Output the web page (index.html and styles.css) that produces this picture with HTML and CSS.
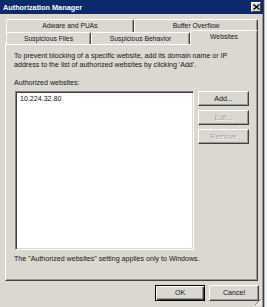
FILE: index.html
```html
<!DOCTYPE html>
<html>
<head>
<meta charset="utf-8">
<link rel="stylesheet" href="styles.css">
</head>
<body>
<div class="screen">
  <div class="window">
    <div class="titlebar">
      <span class="title">Authorization Manager</span>
      <span class="close"><svg width="7" height="6" viewBox="0 0 7 6"><path d="M0.5 0.5 L6.5 5.5 M6.5 0.5 L0.5 5.5" stroke="#000" stroke-width="1.3" fill="none"/></svg></span>
    </div>
    <div class="content">
      <div class="tabs">
        <div class="tabrow back">
          <div class="tab w-adware">Adware and PUAs</div>
          <div class="tab w-buffer">Buffer Overflow</div>
        </div>
        <div class="tabrow front">
          <div class="tab w-files">Suspicious Files</div>
          <div class="tab w-behavior">Suspicious Behavior</div>
          <div class="tab w-websites selected">Websites</div>
        </div>
      </div>
      <div class="panel">
        <p class="desc">To prevent blocking of a specific website, add its domain name or IP<br>address to the list of authorized websites by clicking 'Add'.</p>
        <div class="label">Authorized websites:</div>
        <div class="listrow">
          <div class="listbox">
            <div class="item">10.224.32.80</div>
          </div>
          <div class="sidebtns">
            <div class="btn">Add...</div>
            <div class="btn disabled">Edit...</div>
            <div class="btn disabled">Remove</div>
          </div>
        </div>
        <p class="note">The "Authorized websites" setting applies only to Windows.</p>
      </div>
      <div class="footer">
        <div class="btn default">OK</div>
        <div class="btn">Cancel</div>
      </div>
    </div>
    <svg class="grip" width="8" height="8" viewBox="0 0 8 8"><path d="M7 1 L1 7 M7 3 L3 7 M7 5 L5 7" stroke="#8c8a84" stroke-width="1" fill="none"/><path d="M8 2 L2 8 M8 4 L4 8 M8 6 L6 8" stroke="#ffffff" stroke-width="1" fill="none"/></svg>
  </div>
  <div class="behind"></div>
</div>
</body>
</html>
```
FILE: styles.css
```css
* { box-sizing: border-box; margin: 0; padding: 0; }
html, body { width: 267px; height: 307px; overflow: hidden; }
body {
  font-family: "Liberation Sans", Arial, sans-serif;
  font-size: 7.1px;
  color: #141414;
  background: #eef2f8;
}
.screen { display: flex; height: 307px; }
.window {
  position: relative;
  width: 264px;
  height: 307px;
  background: #dbd8d2;
  border-right: 1px solid #3c3c3c;
  box-shadow: inset -1px 0 0 #9a9892;
  display: flex;
  flex-direction: column;
}
.behind { flex: 1; background: #f1f4f9; border-left: 1px solid #b8b8b8; }

.titlebar {
  height: 14px;
  background: #0b2a6c;
  display: flex;
  align-items: center;
  justify-content: space-between;
  padding: 0 2px 0 3px;
}
.title { color: #fff; font-weight: bold; font-size: 7.3px; }
.close {
  width: 10px; height: 10px;
  background: #dbd8d2;
  border: 1px solid; border-color: #fff #404040 #404040 #fff;
  display: flex; align-items: center; justify-content: center;
}

.content { padding: 5px 0 0 5px; display: flex; flex-direction: column; }

.tabs { margin-left: 1px; height: 25px; display: flex; flex-direction: column; font-size: 6.8px; }
.tabrow { display: flex; }
.tabrow.back { height: 13px; }
.tabrow.front { height: 12px; }
.tab {
  border-top: 1px solid #fff;
  border-left: 1px solid #fff;
  border-right: 1px solid #404040;
  box-shadow: inset -1px 0 0 #9a9892;
  border-radius: 2px 2px 0 0;
  background: #dbd8d2;
  text-align: center;
  line-height: 11px;
}
.tabrow.back .tab { line-height: 12px; }
.tab.selected {
  position: relative;
  z-index: 1;
  margin-top: -2px;
  height: 15px;
  line-height: 11px;
}
.w-adware { width: 128px; }
.w-buffer { width: 124px; }
.w-files { width: 85px; }
.w-behavior { width: 99px; }
.w-websites { width: 68px; }

.panel {
  width: 253px;
  height: 237px;
  border: 1px solid; border-color: #fff #404040 #404040 #fff;
  box-shadow: inset -1px -1px 0 #9a9892;
  padding: 7px 8px 0 8px;
}
.desc { line-height: 9px; }
.label { line-height: 9px; margin-top: 9px; }
.listrow { display: flex; margin-top: 3px; }
.listbox {
  margin-left: 1px;
  width: 181px; height: 159px;
  background: #fff;
  border: 1px solid; border-color: #808080 #fff #fff #808080;
  box-shadow: inset 1px 1px 0 #404040, inset -1px -1px 0 #dbd8d2;
  padding: 3px 4px;
}
.item { line-height: 9px; }
.sidebtns { margin-left: 4px; display: flex; flex-direction: column; gap: 4px; }
.btn {
  width: 51px; height: 15px;
  background: #dbd8d2;
  border: 1px solid; border-color: #fff #404040 #404040 #fff;
  box-shadow: inset -1px -1px 0 #9a9892;
  display: flex; align-items: center; justify-content: center;
}
.btn.disabled { color: #a3a19c; text-shadow: 1px 1px 0 #fff; }
.note { margin-top: 5px; line-height: 9px; }

.footer {
  display: flex; justify-content: flex-end; gap: 4px;
  margin-top: 4px; padding-right: 4px;
}
.footer .btn { width: 50px; height: 16px; }
.btn.default {
  border: 1px solid #000;
  box-shadow: inset 1px 1px 0 #fff, inset -1px -1px 0 #404040, inset -2px -2px 0 #9a9892;
}
.grip { position: absolute; right: 1px; bottom: 1px; }
```
